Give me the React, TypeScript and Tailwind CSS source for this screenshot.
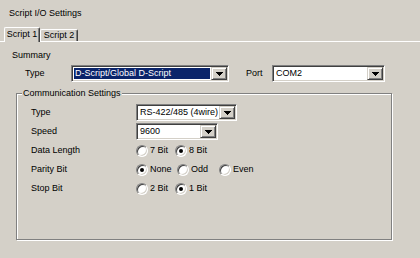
import React from 'react';

function DropArrow() {
  return (
    <div className="w-[16px] h-full shrink-0 bg-[#d4d0c8] border border-t-[#d4d0c8] border-l-[#d4d0c8] border-r-[#404040] border-b-[#404040] shadow-[inset_1px_1px_0_#ffffff,inset_-1px_-1px_0_#808080] flex items-center justify-center">
      <svg width="7" height="4" viewBox="0 0 7 4" shapeRendering="crispEdges">
        <path d="M0 0h7v1h-1v1h-1v1h-1v1h-1v-1h-1v-1h-1v-1h-1z" fill="#000" />
      </svg>
    </div>
  );
}

function Combo({ width, value, selected }: { width: string; value: string; selected?: boolean }) {
  return (
    <div className={`${width} h-[17px] flex bg-white border border-t-[#808080] border-l-[#808080] border-r-white border-b-white shadow-[inset_1px_1px_0_#404040,inset_-1px_-1px_0_#d4d0c8] p-[1px]`}>
      <div className="flex-1 flex items-center p-[1px] min-w-0">
        <span
          className={
            selected
              ? 'h-full w-full flex items-center pl-[1px] bg-[#0a246a] text-white whitespace-nowrap overflow-hidden'
              : 'h-full w-full flex items-center pl-[1px] text-black whitespace-nowrap overflow-hidden'
          }
        >
          {value}
        </span>
      </div>
      <DropArrow />
    </div>
  );
}

function Radio({ label, checked, width }: { label: string; checked?: boolean; width: string }) {
  return (
    <div className={`${width} flex items-center gap-[2px]`}>
      <div className="w-[12px] h-[12px] rounded-full bg-white border border-t-[#808080] border-l-[#808080] border-r-white border-b-white shadow-[inset_1px_1px_0_#404040,inset_-1px_-1px_0_#d4d0c8] flex items-center justify-center">
        {checked && <div className="w-[4px] h-[4px] rounded-full bg-black" />}
      </div>
      <span>{label}</span>
    </div>
  );
}

function Row({ label, children }: { label: string; children: React.ReactNode }) {
  return (
    <div className="h-[19px] flex items-center">
      <span className="w-[105px]">{label}</span>
      {children}
    </div>
  );
}

export default function App() {
  return (
    <div className="w-[420px] h-[258px] bg-[#d4d0c8] text-black text-[9px] font-['Liberation_Sans',Arial,sans-serif] overflow-hidden flex flex-col">
      <div className="h-[27px] flex items-center pl-[9px]">Script I/O Settings</div>

      <div className="h-[14px] flex items-end pl-[4px]">
        <div className="relative z-10 w-[36px] h-[15px] -mb-[1px] bg-[#d4d0c8] border-t border-l border-t-white border-l-white border-r border-r-[#404040] shadow-[inset_-1px_0_0_#808080] rounded-t-[2px] flex items-center justify-center">
          Script 1
        </div>
        <div className="w-[38px] h-[12px] bg-[#d4d0c8] border-t border-l border-t-white border-l-white border-r border-r-[#404040] shadow-[inset_-1px_0_0_#808080] rounded-t-[2px] flex items-center justify-center">
          Script 2
        </div>
      </div>

      <div className="flex-1 border-t border-t-white pt-[8px]">
        <div className="pl-[12px] h-[11px] flex items-center">Summary</div>

        <div className="mt-[4px] h-[17px] flex items-center">
          <span className="ml-[25px] w-[46px]">Type</span>
          <Combo width="w-[158px]" value="D-Script/Global D-Script" selected />
          <span className="ml-[17px] w-[26px]">Port</span>
          <Combo width="w-[113px]" value="COM2" />
        </div>

        <div className="relative mt-[11px] ml-[16px] w-[376px] h-[147px] border border-[#808080] shadow-[inset_1px_1px_0_#ffffff,1px_1px_0_#ffffff] pt-[9px] pl-[14px]">
          <span className="absolute -top-[6px] left-[5px] px-[1px] bg-[#d4d0c8] leading-[11px]">
            Communication Settings
          </span>
          <Row label="Type">
            <Combo width="w-[101px]" value="RS-422/485 (4wire)" />
          </Row>
          <Row label="Speed">
            <Combo width="w-[82px]" value="9600" />
          </Row>
          <Row label="Data Length">
            <Radio width="w-[39px]" label="7 Bit" />
            <Radio width="w-[39px]" label="8 Bit" checked />
          </Row>
          <Row label="Parity Bit">
            <Radio width="w-[41px]" label="None" checked />
            <Radio width="w-[42px]" label="Odd" />
            <Radio width="w-[42px]" label="Even" />
          </Row>
          <Row label="Stop Bit">
            <Radio width="w-[39px]" label="2 Bit" />
            <Radio width="w-[39px]" label="1 Bit" checked />
          </Row>
        </div>
      </div>
    </div>
  );
}
